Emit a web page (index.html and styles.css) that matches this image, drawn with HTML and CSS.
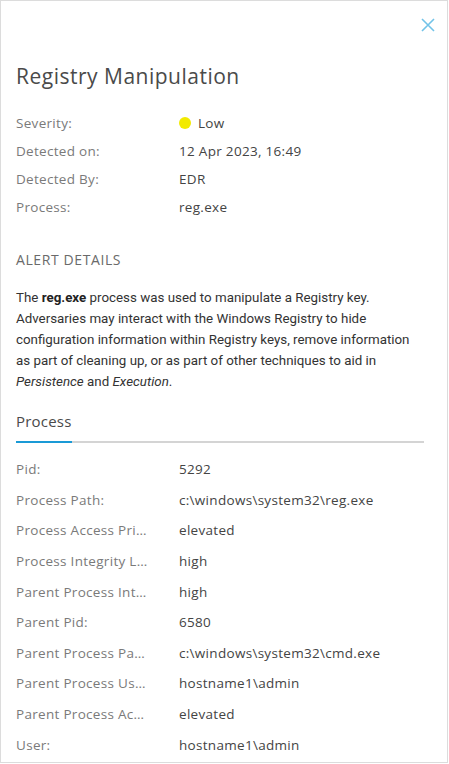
FILE: index.html
```html
<!DOCTYPE html>
<html>
<head>
<meta charset="utf-8">
<link rel="stylesheet" href="styles.css">
</head>
<body>
<div class="panel">
  <div class="topbar">
    <button class="close" aria-label="Close">
      <svg width="16" height="16" viewBox="0 0 16 16"><path d="M2 2 L14 14 M14 2 L2 14" stroke="#72c3e8" stroke-width="1.6" fill="none"/></svg>
    </button>
  </div>
  <h1 class="title">Registry Manipulation</h1>
  <div class="summary">
    <div class="row"><span class="label">Severity:</span><span class="value"><span class="dot"></span>Low</span></div>
    <div class="row"><span class="label">Detected on:</span><span class="value">12 Apr 2023, 16:49</span></div>
    <div class="row"><span class="label">Detected By:</span><span class="value">EDR</span></div>
    <div class="row"><span class="label">Process:</span><span class="value">reg.exe</span></div>
  </div>
  <h2 class="section">ALERT DETAILS</h2>
  <p class="desc">The <b>reg.exe</b> process was used to manipulate a Registry key. Adversaries may interact with the Windows Registry to hide configuration information within Registry keys, remove information as part of cleaning up, or as part of other techniques to aid in <i>Persistence</i> and <i>Execution</i>.</p>
  <div class="tabs"><span class="tab active">Process</span></div>
  <div class="details">
    <div class="drow"><span class="dlabel">Pid:</span><span class="dvalue">5292</span></div>
    <div class="drow"><span class="dlabel">Process Path:</span><span class="dvalue">c:\windows\system32\reg.exe</span></div>
    <div class="drow"><span class="dlabel">Process Access Privileges:</span><span class="dvalue">elevated</span></div>
    <div class="drow"><span class="dlabel">Process Integrity Level:</span><span class="dvalue">high</span></div>
    <div class="drow"><span class="dlabel">Parent Process Integrity Level:</span><span class="dvalue">high</span></div>
    <div class="drow"><span class="dlabel">Parent Pid:</span><span class="dvalue">6580</span></div>
    <div class="drow"><span class="dlabel">Parent Process Path:</span><span class="dvalue">c:\windows\system32\cmd.exe</span></div>
    <div class="drow"><span class="dlabel">Parent Process User:</span><span class="dvalue">hostname1\admin</span></div>
    <div class="drow"><span class="dlabel">Parent Process Access Privileges:</span><span class="dvalue">elevated</span></div>
    <div class="drow"><span class="dlabel">User:</span><span class="dvalue">hostname1\admin</span></div>
  </div>
</div>
</body>
</html>
```

FILE: styles.css
```css
html, body {
  margin: 0;
  padding: 0;
  background: #fff;
}
.panel {
  box-sizing: border-box;
  width: 448px;
  height: 763px;
  border: 1px solid #dcdcdc;
  padding: 0 23px 0 15px;
  font-family: "Open Sans", "Liberation Sans", sans-serif;
  color: #444;
  overflow: hidden;
}
.topbar {
  display: flex;
  justify-content: flex-end;
  padding-top: 16px;
  margin-right: -12px;
}
.close {
  border: 0;
  background: none;
  padding: 0;
  width: 16px;
  height: 16px;
  display: flex;
}
.title {
  margin: 31px 0 0 0;
  font-size: 21px;
  font-weight: 400;
  letter-spacing: 0.5px;
  color: #4a4a4a;
  line-height: 24px;
}
.summary {
  margin-top: 21px;
  display: flex;
  flex-direction: column;
}
.row {
  display: flex;
  height: 28px;
  align-items: center;
  font-size: 13.5px;
  letter-spacing: 0.3px;
}
.label {
  width: 163px;
  color: #7a7a7a;
}
.value {
  color: #444;
  display: flex;
  align-items: center;
}
.dot {
  width: 12px;
  height: 12px;
  border-radius: 50%;
  background: #f2ea00;
  margin-right: 7px;
}
.section {
  margin: 30px 0 0 0;
  font-size: 14px;
  font-weight: 400;
  letter-spacing: 0.6px;
  color: #6a6a6a;
  line-height: 18px;
}
.desc {
  margin: 18px 0 0 0;
  font-family: Roboto, "Liberation Sans", sans-serif;
  font-size: 13.35px;
  line-height: 21px;
  color: #333;
}
.desc b { font-weight: 700; color: #222; }
.tabs {
  margin-top: 19px;
  border-bottom: 2px solid #d4d4d4;
  display: flex;
}
.tab {
  font-size: 15px;
  letter-spacing: 0.2px;
  color: #4a4a4a;
  padding: 0 1px 10px 0;
  margin-bottom: -2px;
  line-height: 20px;
}
.tab.active {
  border-bottom: 2px solid #1a9ad6;
}
.details {
  margin-top: 11px;
  display: flex;
  flex-direction: column;
}
.drow {
  display: flex;
  height: 30.6px;
  align-items: center;
  font-size: 13.5px;
  letter-spacing: 0.3px;
}
.dlabel {
  width: 133px;
  margin-right: 30px;
  color: #7a7a7a;
  white-space: nowrap;
  overflow: hidden;
  text-overflow: ellipsis;
}
.dvalue {
  color: #444;
}
```
